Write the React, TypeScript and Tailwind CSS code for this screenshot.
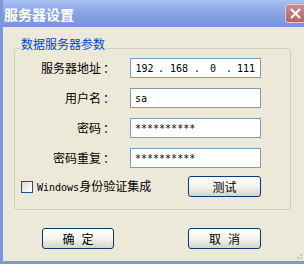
import React from 'react';

const XpButton = ({ label, className = '' }: { label: string[]; className?: string }) => (
  <button
    className={`h-[21px] rounded-[3px] border border-[#003c74] bg-gradient-to-b from-white via-[#f4f3ee] to-[#d9d4c8] flex items-center justify-center gap-[7px] text-[12px] leading-none text-black ${className}`}
  >
    {label.map((ch, i) => (
      <span key={i}>{ch}</span>
    ))}
  </button>
);

const Field = ({ children }: { children: React.ReactNode }) => (
  <div className="h-[20px] border border-[#7f9db9] bg-white flex items-center pl-[4px] font-['DejaVu_Sans_Mono',monospace] text-[10px] text-black">
    {children}
  </div>
);

const App = () => {
  const rows = [
    { label: '服务器地址', value: null },
    { label: '用户名', value: 'sa' },
    { label: '密码', value: '**********' },
    { label: '密码重复', value: '**********' },
  ];

  return (
    <div className="relative w-[304px] h-[264px] overflow-hidden bg-[#ece9d8] border-l-[3px] border-b-[3px] border-[#7b97e0] flex flex-col font-['Noto_Sans_CJK_SC',sans-serif]">
      {/* title bar */}
      <div className="h-[27px] shrink-0 flex items-center pl-[1px] bg-gradient-to-b from-[#a9c0f2] via-[#86a3e6] to-[#7893de]">
        <span className="text-[14px] font-bold text-white leading-none">服务器设置</span>
        <div className="ml-auto -mr-[2px] w-[21px] h-[19px] rounded-[3px] border border-[#e8c4c8] bg-gradient-to-b from-[#d08a90] to-[#b8646c] flex items-center justify-center">
          <svg width="11" height="11" viewBox="0 0 11 11">
            <path d="M1.5 1.5 L9.5 9.5 M9.5 1.5 L1.5 9.5" stroke="white" strokeWidth="2" strokeLinecap="round" />
          </svg>
        </div>
      </div>

      {/* body */}
      <div className="flex-1 pl-[11px] pt-[21px]">
        <div className="relative w-[277px] h-[162px] rounded-[3px] border border-[#d0d0bf]">
          <span className="absolute -top-[12px] left-[5px] px-[1px] bg-[#ece9d8] text-[12px] leading-[14px] text-[#0046d5]">
            数据服务器参数
          </span>

          <div className="grid grid-cols-[98px_131px] gap-x-[17px] gap-y-[10px] pt-[9px]">
            {rows.map((row, i) => (
              <React.Fragment key={i}>
                <div className="h-[20px] flex justify-end text-[12px] leading-[20px] text-black">
                  <span>{row.label}</span>
                  <span className="w-[12px] pl-[2px] text-left">：</span>
                </div>
                {row.value === null ? (
                  <div className="h-[20px] border border-[#7f9db9] bg-white flex items-center font-['DejaVu_Sans_Mono',monospace] text-[10px] text-black">
                    <span className="w-[27px] text-center">192</span>
                    <span className="w-[6px] text-center">.</span>
                    <span className="w-[30px] text-center">168</span>
                    <span className="w-[6px] text-center">.</span>
                    <span className="w-[26px] text-center">0</span>
                    <span className="w-[6px] text-center">.</span>
                    <span className="w-[28px] text-center">111</span>
                  </div>
                ) : (
                  <Field>{row.value}</Field>
                )}
              </React.Fragment>
            ))}
          </div>

          <div className="mt-[8px] h-[21px] flex items-center pl-[6px] pr-[29px]">
            <div className="w-[12px] h-[12px] border border-[#1c5180] bg-gradient-to-br from-[#dcdcd5] to-white" />
            <span className="ml-[4px] text-[12px] leading-none text-black">
              <span className="font-['DejaVu_Sans_Mono',monospace] text-[10px]">Windows</span>身份验证集成
            </span>
            <XpButton label={['测试']} className="ml-auto w-[73px]" />
          </div>
        </div>

        <div className="mt-[18px] flex pl-[28px] gap-[74px]">
          <XpButton label={['确', '定']} className="w-[72px]" />
          <XpButton label={['取', '消']} className="w-[73px]" />
        </div>
      </div>

      {/* resize grip */}
      <div className="absolute right-[2px] bottom-[2px] grid grid-cols-2 gap-[1px]">
        <span className="w-[2px] h-[2px]" />
        <span className="w-[2px] h-[2px] bg-[#c9c5b5]" />
        <span className="w-[2px] h-[2px] bg-[#c9c5b5]" />
        <span className="w-[2px] h-[2px] bg-[#c9c5b5]" />
      </div>
    </div>
  );
};

export default App;
